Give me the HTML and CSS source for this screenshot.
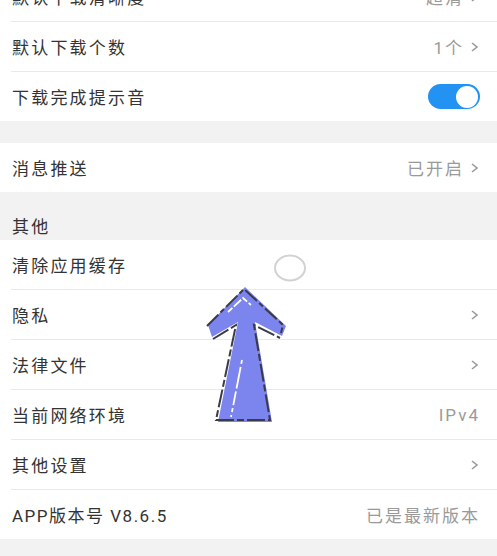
FILE: index.html
```html
<!DOCTYPE html>
<html lang="zh">
<head>
<meta charset="utf-8">
<link rel="stylesheet" href="styles.css">
</head>
<body>
<div class="page">
  <div class="group group-first">
    <div class="row"><span class="label">默认下载清晰度</span><span class="value">超清<svg class="chev" viewBox="0 0 7 10"><polyline points="1,1 6,5 1,9"/></svg></span></div>
    <div class="row"><span class="label">默认下载个数</span><span class="value">1个<svg class="chev" viewBox="0 0 7 10"><polyline points="1,1 6,5 1,9"/></svg></span></div>
    <div class="row"><span class="label">下载完成提示音</span><span class="toggle"><span class="knob"></span></span></div>
  </div>
  <div class="spacer"></div>
  <div class="group">
    <div class="row"><span class="label">消息推送</span><span class="value">已开启<svg class="chev" viewBox="0 0 7 10"><polyline points="1,1 6,5 1,9"/></svg></span></div>
  </div>
  <div class="section-title">其他</div>
  <div class="group">
    <div class="row"><span class="label">清除应用缓存</span></div>
    <div class="row"><span class="label">隐私</span><span class="value"><svg class="chev" viewBox="0 0 7 10"><polyline points="1,1 6,5 1,9"/></svg></span></div>
    <div class="row"><span class="label">法律文件</span><span class="value"><svg class="chev" viewBox="0 0 7 10"><polyline points="1,1 6,5 1,9"/></svg></span></div>
    <div class="row"><span class="label">当前网络环境</span><span class="value value-plain">IPv4</span></div>
    <div class="row"><span class="label">其他设置</span><span class="value"><svg class="chev" viewBox="0 0 7 10"><polyline points="1,1 6,5 1,9"/></svg></span></div>
    <div class="row"><span class="label label-mixed">APP版本号 V8.6.5</span><span class="value value-plain">已是最新版本</span></div>
  </div>
</div>
<svg class="overlay" viewBox="0 0 497 556" width="497" height="556">
  <ellipse cx="290" cy="268" rx="15" ry="12.5" fill="#ffffff" stroke="#d2d2d2" stroke-width="2"/>
  <polygon points="245,287 286,326 282,336 255,322 272,422 218,422 238,322 212,337 208,325" fill="#7c84ee"/>
  <polyline points="207,326 244,289 283,325 281,333" fill="none" stroke="#3a3a48" stroke-width="2" stroke-dasharray="16 3 5 3"/>
  <polyline points="213,339 236,325 216,420 270,420 254,325 280,338" fill="none" stroke="#3a3a48" stroke-width="2" stroke-dasharray="18 3 7 3"/>
  <polyline points="228,312 243,298 251,305" fill="none" stroke="#ffffff" stroke-width="1.8" stroke-dasharray="6 2 10 2"/>
  <line x1="242" y1="360" x2="231" y2="417" stroke="#ffffff" stroke-width="1.8" stroke-dasharray="4 3 22 3 14 3"/>
</svg>
</body>
</html>
```
FILE: styles.css
```css
html, body {
  margin: 0;
  padding: 0;
}
body {
  background: #f2f2f2;
  font-family: Roboto, "Noto Sans CJK SC", sans-serif;
  color: #333333;
  width: 497px;
  height: 556px;
  overflow: hidden;
  position: relative;
}
.page {
  display: flex;
  flex-direction: column;
}
.group {
  background: #ffffff;
}
.group-first {
  margin-top: -28px;
}
.row {
  margin-left: 11px;
  padding: 0 19px 0 1px;
  height: 49px;
  border-bottom: 1px solid #e9e9e9;
  display: flex;
  align-items: center;
  justify-content: space-between;
}
.row:last-child {
  border-bottom: none;
}
.label {
  font-size: 17px;
  letter-spacing: 2.2px;
  color: #333333;
}
.label-mixed {
  letter-spacing: 1.5px;
}
.value {
  display: flex;
  align-items: center;
  font-size: 17px;
  letter-spacing: 2px;
  color: #9a9a9a;
}
.value-plain {
  margin-right: -2px;
}
.chev {
  width: 7px;
  height: 10px;
  margin-left: 7px;
  fill: none;
  stroke: #9a9a9a;
  stroke-width: 1.6;
}
.spacer {
  height: 22px;
}
.section-title {
  height: 48px;
  box-sizing: border-box;
  padding: 0 12px 2px;
  display: flex;
  align-items: flex-end;
  font-size: 17px;
  line-height: 22px;
  letter-spacing: 2.2px;
  color: #333333;
}
.toggle {
  width: 52px;
  height: 25px;
  border-radius: 13px;
  background: #2293f3;
  display: flex;
  align-items: center;
  justify-content: flex-end;
  padding: 0 2px;
  box-sizing: border-box;
  margin-right: -2px;
}
.knob {
  width: 22px;
  height: 22px;
  border-radius: 50%;
  background: #ffffff;
}
.overlay {
  position: absolute;
  left: 0;
  top: 0;
  pointer-events: none;
}
```
